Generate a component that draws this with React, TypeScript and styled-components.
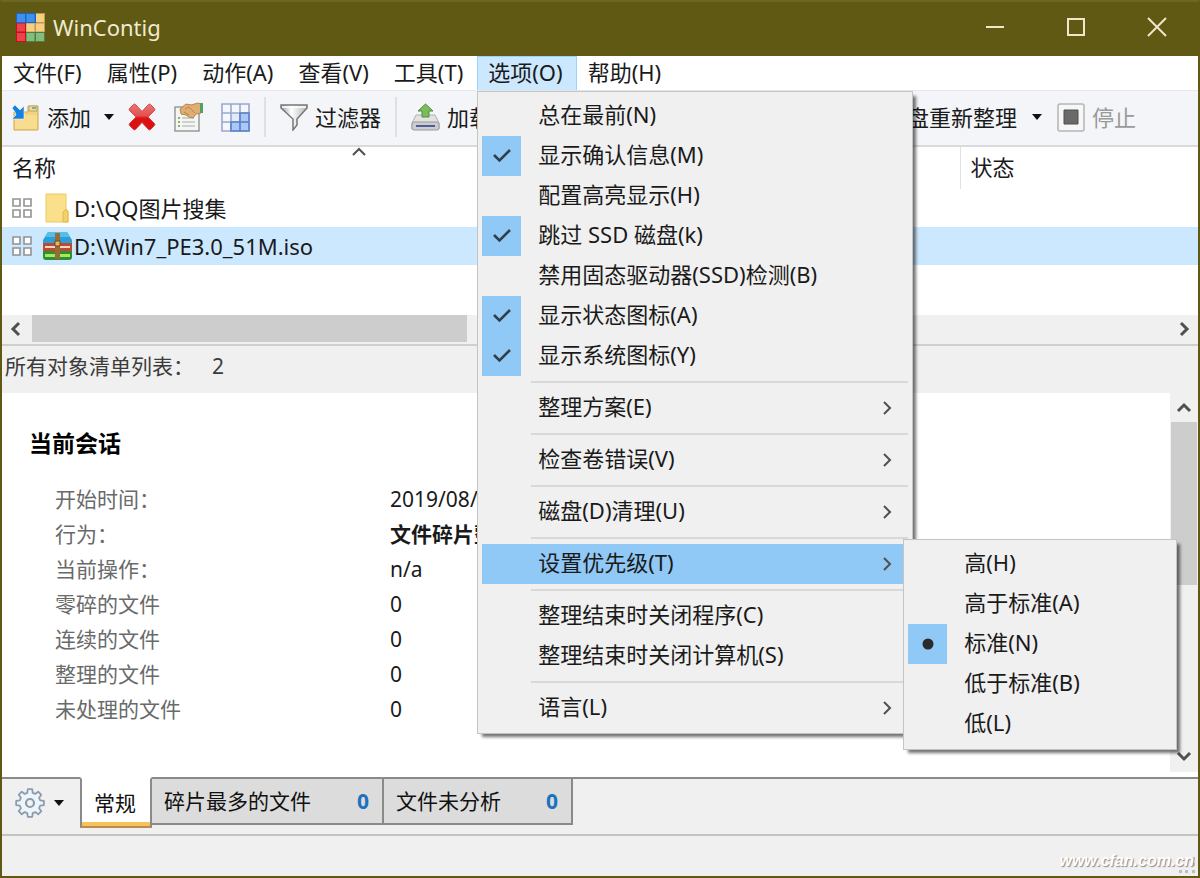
import React from "react";
import styled, { createGlobalStyle, css } from "styled-components";

const olive = "#5f5913";
const face = "#f0f0f0";
const accent = "#90c8f6";

const GlobalStyle = createGlobalStyle`
  * { box-sizing: border-box; }
  body { margin: 0; background: ${face}; }
  button { font: inherit; color: inherit; background: none; border: 0; padding: 0; text-align: left; }
  body, #root { font-family: "Noto Sans", "Noto Sans CJK SC", sans-serif; font-size: 22px; line-height: 32px; color: #1a1a1a; }
`;

const Window = styled.div`
  display: flex;
  flex-direction: column;
  min-height: 100vh;
  border: 2px solid ${olive};
  border-top-color: #6c6624;
  background: #fff;
  overflow: hidden;
  white-space: nowrap;
`;

const TitleBar = styled.header`
  display: flex;
  align-items: center;
  height: 54px;
  padding: 0 5px 4px 14px;
  gap: 8px;
  background: ${olive};
  color: #f0ead0;
`;

const Title = styled.h1`
  flex: 1;
  margin: 0;
  font-size: 22px;
  font-weight: 400;
`;

const CaptionButtons = styled.div`
  display: flex;
  gap: 8px;
`;

const CaptionButton = styled.button`
  display: flex;
  align-items: center;
  justify-content: center;
  width: 73px;
  height: 50px;
`;

const MenuBar = styled.nav`
  display: flex;
  height: 34px;
`;

const MenuSlot = styled.div`
  position: relative;
`;

const MenuButton = styled.button<{ $open?: boolean }>`
  display: block;
  height: 34px;
  padding: 0 14px 2px 11px;
  ${(p) =>
    p.$open &&
    css`
      background: #cce8ff;
      box-shadow: inset 1px 1px #99d1ff, inset -1px 0 #99d1ff;
    `}
`;

const Popup = styled.div`
  position: absolute;
  z-index: 2;
  padding: 4px 4px 5px;
  background: ${face};
  border: 1px solid #c4c4c4;
  box-shadow: 4px 4px 3px -1px rgba(0, 0, 0, 0.55);
`;

const OptionsPopup = styled(Popup)`
  top: 35px;
  left: 0;
  width: 436px;
`;

const PriorityPopup = styled(Popup)`
  top: -5px;
  left: 421px;
  width: 274px;
`;

const ItemSlot = styled.div`
  position: relative;
`;

const Item = styled.button<{ $active?: boolean }>`
  display: flex;
  align-items: center;
  width: 100%;
  height: 40px;
  padding-right: 13px;
  background: ${(p) => (p.$active ? accent : "transparent")};
`;

const Mark = styled.span<{ $on?: boolean }>`
  display: flex;
  align-items: center;
  justify-content: center;
  width: 39px;
  height: 40px;
  margin-right: 17px;
  background: ${(p) => (p.$on ? accent : "transparent")};
`;

const ItemText = styled.span`
  flex: 1;
  padding-bottom: 4px;
`;

const Separator = styled.hr`
  height: 2px;
  margin: 5px 0 5px 49px;
  border: 0;
  background: #d8d8d8;
`;

const ToolBar = styled.div`
  display: flex;
  align-items: center;
  height: 57px;
  padding: 0 62px 2px 10px;
  background: #f3f5f8;
  border-top: 1px solid #e6e7e9;
  border-bottom: 2px solid #d9dadc;
`;

const ToolButton = styled.button<{ $width?: number }>`
  display: flex;
  align-items: center;
  gap: 7px;
  min-width: ${(p) => (p.$width ? `${p.$width}px` : "auto")};
  height: 48px;
  &:disabled {
    color: #9a9a9a;
  }
`;

const ToolDivider = styled.span`
  width: 2px;
  height: 40px;
  margin: 0 14px;
  background: #dfe0e3;
`;

const ToolEnd = styled.div`
  display: flex;
  align-items: center;
  gap: 15px;
  margin-left: auto;
`;

const FileTable = styled.table`
  width: 100%;
  table-layout: fixed;
  border-collapse: collapse;
`;

const HeadCell = styled.th<{ $width?: number }>`
  position: relative;
  width: ${(p) => (p.$width ? `${p.$width}px` : "auto")};
  height: 42px;
  padding: 0 10px 2px;
  font-weight: 400;
  text-align: left;
  & + & {
    border-left: 1px solid #e2e2e2;
  }
`;

const SortArrow = styled.span`
  position: absolute;
  top: -3px;
  left: 50%;
  display: flex;
  transform: translateX(-50%);
`;

const FileRow = styled.tr<{ $selected?: boolean }>`
  height: 38px;
  background: ${(p) => (p.$selected ? "#cce8ff" : "transparent")};
`;

const FileCell = styled.td`
  padding: 0 10px;
`;

const FileName = styled.span`
  display: flex;
  align-items: center;
  height: 38px;
`;

const IconBox = styled.span`
  display: flex;
  justify-content: center;
  width: 30px;
  margin: 0 2px 0 10px;
`;

const ListPane = styled.section`
  min-height: 168px;
`;

const HorizontalScroll = styled.div`
  display: flex;
  align-items: center;
  justify-content: space-between;
  height: 31px;
  padding: 0 6px 2px;
  background: ${face};
  border-bottom: 2px solid #cfcfcf;
`;

const HorizontalThumb = styled.span`
  width: 435px;
  height: 27px;
  margin: 0 auto 0 8px;
  background: #cdcdcd;
`;

const Summary = styled.p`
  display: flex;
  align-items: center;
  gap: 18px;
  height: 47px;
  margin: 0;
  padding: 0 3px 8px;
  background: ${face};
  color: #3c3c3c;
  font-size: 21px;
`;

const SessionPane = styled.section`
  display: flex;
  flex: 1;
  justify-content: space-between;
  min-height: 380px;
  padding-bottom: 5px;
`;

const Session = styled.div`
  padding: 34px 27px 0;
`;

const SessionTitle = styled.h2`
  margin: 0 0 23px;
  font-size: 23px;
  line-height: 32px;
  font-weight: 700;
  color: #000;
`;

const Facts = styled.dl`
  display: grid;
  grid-template-columns: 335px auto;
  grid-auto-rows: 35px;
  margin: 0;
  padding-left: 26px;
  font-size: 21px;
  line-height: 35px;
`;

const Term = styled.dt`
  color: #6a6a6a;
`;

const Value = styled.dd<{ $bold?: boolean }>`
  margin: 0;
  font-weight: ${(p) => (p.$bold ? 700 : 400)};
`;

const VerticalScroll = styled.div`
  display: flex;
  flex-direction: column;
  align-items: center;
  width: 28px;
  padding: 7px 0 8px;
  background: ${face};
`;

const VerticalThumb = styled.span`
  width: 26px;
  height: 163px;
  margin: 6px 0 auto;
  background: #cdcdcd;
`;

const TabBar = styled.div`
  display: flex;
  align-items: flex-start;
  height: 57px;
  background: ${face};
  box-shadow: inset 0 2px #8a8a8a;
`;

const GearButton = styled.button`
  display: flex;
  align-items: center;
  gap: 9px;
  width: 78px;
  height: 52px;
  padding-left: 13px;
`;

const Tab = styled.button<{ $active?: boolean; $width: number }>`
  display: flex;
  align-items: center;
  justify-content: space-between;
  width: ${(p) => p.$width}px;
  height: 48px;
  padding: 0 13px 0 12px;
  font-size: 21px;
  color: #111;
  background: #dcdcdc;
  border: 2px solid #8a8a8a;
  border-left: 0;
  ${(p) =>
    p.$active &&
    css`
      height: 51px;
      background: #fff;
      border-left: 2px solid #8a8a8a;
      border-top-color: #fff;
      border-bottom-color: #b98d4f;
      box-shadow: inset 0 -4px #f6c25c;
    `}
`;

const Count = styled.b`
  color: #1a72c0;
`;

const StatusBar = styled.footer`
  position: relative;
  display: flex;
  align-items: flex-end;
  justify-content: flex-end;
  height: 42px;
  background: ${face};
  border-top: 2px solid #c3c3c3;
`;

const Grip = styled.svg`
  position: absolute;
  right: 2px;
  bottom: 2px;
`;

const SiteMark = styled.span`
  position: relative;
  padding: 0 4px 3px 0;
  font-family: "Liberation Sans", sans-serif;
  font-size: 16px;
  line-height: 24px;
  font-style: italic;
  font-weight: 700;
  color: #fff;
  text-shadow: 1px 1px 1px #8a8a8a;
`;

const Caret = () => (
  <svg width="10" height="6" viewBox="0 0 10 6" aria-hidden="true">
    <path d="M0 0h10L5 6z" fill="#111" />
  </svg>
);

type Direction = "up" | "down" | "left" | "right";
const turns: Record<Direction, number> = { up: 0, right: 90, down: 180, left: 270 };

const Chevron = ({ to, size = 16, weight = 3 }: { to: Direction; size?: number; weight?: number }) => (
  <svg width={size} height={size} viewBox="0 0 16 16" aria-hidden="true">
    <path
      d="M2 11L8 5l6 6"
      transform={`rotate(${turns[to]} 8 8)`}
      fill="none"
      stroke="#505050"
      strokeWidth={weight}
    />
  </svg>
);

const appTiles = [
  "#3f8fee", "#3f8fee", "#f6cf82",
  "#e8454c", "#f6cf82", "#f6cf82",
  "#e8454c", "#86bd7c", "#86bd7c",
];

const AppIcon = () => (
  <svg width="29" height="29" viewBox="0 0 29 29" aria-hidden="true">
    <path d="M0 0h20v10H0z" fill="#1767c8" />
    <path d="M0 10h10v19H0z" fill="#c90f1c" />
    <path d="M20 0h9v19H10v-9h10z" fill="#b99a4f" />
    <path d="M10 19h19v10H10z" fill="#4b7d45" />
    {appTiles.map((fill, i) => (
      <rect key={i} x={1 + (i % 3) * 9.5} y={1 + Math.floor(i / 3) * 9.5} width="8" height="8" fill={fill} />
    ))}
  </svg>
);

const AddIcon = () => (
  <svg width="28" height="28" viewBox="0 0 28 28" aria-hidden="true">
    <path d="M2 9h14V3h10v24H2z" fill="#f3d27d" stroke="#cfa94f" />
    <path d="M17 3h8v5h-8z" fill="#e9e0ae" stroke="#b7a765" />
    <path d="M20 4h4v2h-4z" fill="#8fa98a" />
    <path d="M3 12h22v14H3z" fill="#f8dc90" />
    <path d="M0 5l3-3 5 5 4-4v13H0l4-4-1-3z" fill="#1482e0" stroke="#f3f5f8" strokeWidth=".6" />
  </svg>
);

const DeleteIcon = () => (
  <svg width="28" height="28" viewBox="0 0 28 28" aria-hidden="true">
    <defs>
      <linearGradient id="cross" x1="0" y1="0" x2="0" y2="1">
        <stop offset="0" stopColor="#ea7676" />
        <stop offset=".45" stopColor="#e25050" />
        <stop offset=".55" stopColor="#dc1212" />
        <stop offset="1" stopColor="#d81010" />
      </linearGradient>
    </defs>
    <path
      d="M1.500 5.500L5.500 1.500q1-1 2 0L14 8.500l6.500-7q1-1 2 0l4 4q.8 1 0 2L20 14l6.500 6.500q.8 1 0 2l-4 4q-1 .8-2 0L14 19.500l-6.500 7q-1 .8-2 0l-4-4q-.8-1 0-2L8 14 1.500 7.500q-.8-1 0-2z"
      fill="url(#cross)"
      stroke="#da4444"
    />
  </svg>
);

const PropertiesIcon = () => (
  <svg width="29" height="30" viewBox="0 0 29 30" aria-hidden="true">
    <path d="M1 5h24v24H1z" fill="#f5f5f3" stroke="#999" strokeWidth="1.500" />
    <path d="M4 16h2M4 20h2M4 24h2" stroke="#86b36a" strokeWidth="2" />
    <path d="M8 16h12M8 20h13M8 24h13" stroke="#c0c3c6" strokeWidth="1.500" />
    <path d="M6 7l6-5 5 1 7-2 3 1v9l-5 1-3 4-4-1-3-2-5-1z" fill="#e0ad74" stroke="#b8864d" />
    <path d="M11 7l4-2 6 6M10 10l5 3" fill="none" stroke="#b8864d" />
    <path d="M26 1h3v10h-3z" fill="#4fa263" />
  </svg>
);

const GridIcon = () => (
  <svg width="29" height="29" viewBox="0 0 29 29" aria-hidden="true">
    <path d="M1 1h27v27H1z" fill="#f4f7fd" />
    <path d="M10 10h9v9h-9z" fill="#e3e9f6" />
    <path d="M19 10h9v18H10v-9h9z" fill="#a9c8f8" />
    <path d="M1 1h27v27H1zM10 1v27M19 1v27M1 10h27M1 19h27" fill="none" stroke="#99a8cc" strokeWidth="1.600" />
    <path d="M19 10h9v18H10v-9h9zM19 19h9M19 19v9" fill="none" stroke="#5d82ca" strokeWidth="1.600" />
  </svg>
);

const FilterIcon = () => (
  <svg width="28" height="27" viewBox="0 0 28 27" aria-hidden="true">
    <defs>
      <linearGradient id="funnel">
        <stop offset="0" stopColor="#9d9d9d" />
        <stop offset=".4" stopColor="#fff" />
        <stop offset="1" stopColor="#b5b5b5" />
      </linearGradient>
    </defs>
    <path d="M1 1h26v3L17 15v6l-4 5V15L1 4z" fill="url(#funnel)" stroke="#777" strokeWidth="1.500" />
    <path d="M2 3h24" stroke="#fff" strokeWidth="1.500" />
  </svg>
);

const LoadIcon = () => (
  <svg width="29" height="28" viewBox="0 0 29 28" aria-hidden="true">
    <path d="M5 12h19l4 8v6H1v-6z" fill="#e2e2e2" stroke="#b0b0b0" />
    <rect x="1" y="19" width="27" height="8" rx="2" fill="#cdcdcd" stroke="#9a9a9a" />
    <path d="M5 23h19" stroke="#4b5d9b" strokeWidth="2" />
    <path d="M14.500 1l7.500 7h-4v6h-7V8H7z" fill="#7dbb5c" stroke="#4d8f3b" />
  </svg>
);

const StopIcon = () => (
  <svg width="28" height="29" viewBox="0 0 28 29" aria-hidden="true">
    <rect x="1" y="1" width="26" height="27" rx="2" fill="#f7f7f7" stroke="#b5b5b5" strokeWidth="1.500" />
    <path d="M7 7h14v14H7z" fill="#6a6a6a" stroke="#4f4f4f" />
  </svg>
);

const StateIcon = () => (
  <svg width="20" height="20" viewBox="0 0 20 20" aria-hidden="true">
    <path
      d="M1 1h7v7H1zM12 1h7v7h-7zM1 12h7v7H1zM12 12h7v7h-7z"
      fill="#fff"
      stroke="#929292"
      strokeWidth="1.600"
    />
  </svg>
);

const FolderIcon = () => (
  <svg width="24" height="30" viewBox="0 0 24 30" aria-hidden="true">
    <path d="M1 1h20v15l2 2v11H1z" fill="#fae08a" stroke="#ecca62" />
    <path d="M18 29V19l3-3 2 2v11z" fill="#f3d06a" stroke="#dfb94e" />
  </svg>
);

const ArchiveIcon = () => (
  <svg width="29" height="28" viewBox="0 0 29 28" aria-hidden="true">
    <path d="M5 0h19l5 8v3H0V8z" fill="#2a9fd8" />
    <path d="M5 0h19l3 5H2z" fill="#54bdea" />
    <path d="M0 11h29v8H0z" fill="#c0492f" />
    <path d="M2 14h25v2H2z" fill="#f0d5c8" />
    <path d="M0 19h29v6q0 3-3 3H3q-3 0-3-3z" fill="#2f8f35" />
    <path d="M2 22h25v3H2z" fill="#a5ea5a" />
    <path d="M12 1h5v26h-5z" fill="#9a6a34" />
    <path d="M12 9h5v5h-5z" fill="#e2b862" stroke="#6d4a1e" />
  </svg>
);

const polar = (radius: number, degrees: number) => {
  const a = (degrees * Math.PI) / 180;
  return `${(15 + radius * Math.sin(a)).toFixed(2)} ${(15 - radius * Math.cos(a)).toFixed(2)}`;
};

const gearOutline =
  "M" +
  [0, 45, 90, 135, 180, 225, 270, 315]
    .map((a) => [polar(10.5, a - 15), polar(14, a - 9), polar(14, a + 9), polar(10.5, a + 15)].join("L"))
    .join("L") +
  "z";

const GearIcon = () => (
  <svg width="30" height="30" viewBox="0 0 30 30" aria-hidden="true">
    <path d={gearOutline} fill="#edf4fa" stroke="#8a9cae" strokeWidth="1.800" strokeLinejoin="round" />
    <circle cx="15" cy="15" r="4" fill="#f3f3f3" stroke="#8a9cae" strokeWidth="2.200" />
  </svg>
);

const CheckIcon = () => (
  <svg width="20" height="16" viewBox="0 0 20 16" aria-hidden="true">
    <path d="M2 7l5.500 5.500L18 2" fill="none" stroke="#2f3f4c" strokeWidth="2.600" />
  </svg>
);

const DotIcon = () => (
  <svg width="12" height="12" viewBox="0 0 12 12" aria-hidden="true">
    <circle cx="6" cy="6" r="5.500" fill="#2b2b2b" />
  </svg>
);

const GripDots = () => (
  <Grip width="18" height="18" viewBox="0 0 18 18" aria-hidden="true">
    <path
      d="M1 14h3v3H1zM7 14h3v3H7zM14 14h3v3h-3zM7 7h3v3H7zM14 7h3v3h-3zM14 1h3v3h-3z"
      fill="#bdbdbd"
    />
  </Grip>
);

const captionShapes: [string, string][] = [
  ["最小化", "M1 10h18"],
  ["最大化", "M2 2h16v16H2z"],
  ["关闭", "M1 1l18 18M19 1L1 19"],
];

type Entry = { label: string; checked?: boolean; more?: boolean };

const optionGroups: Entry[][] = [
  [
    { label: "总在最前(N)" },
    { label: "显示确认信息(M)", checked: true },
    { label: "配置高亮显示(H)" },
    { label: "跳过 SSD 磁盘(k)", checked: true },
    { label: "禁用固态驱动器(SSD)检测(B)" },
    { label: "显示状态图标(A)", checked: true },
    { label: "显示系统图标(Y)", checked: true },
  ],
  [{ label: "整理方案(E)", more: true }],
  [{ label: "检查卷错误(V)", more: true }],
  [{ label: "磁盘(D)清理(U)", more: true }],
  [{ label: "设置优先级(T)", more: true }],
  [{ label: "整理结束时关闭程序(C)" }, { label: "整理结束时关闭计算机(S)" }],
  [{ label: "语言(L)", more: true }],
];

const priorities = ["高(H)", "高于标准(A)", "标准(N)", "低于标准(B)", "低(L)"];
const currentPriority = "标准(N)";
const menus = ["文件(F)", "属性(P)", "动作(A)", "查看(V)", "工具(T)", "选项(O)", "帮助(H)"];

const facts: [string, string][] = [
  ["开始时间：", "2019/08/12"],
  ["行为：", "文件碎片整理"],
  ["当前操作：", "n/a"],
  ["零碎的文件", "0"],
  ["连续的文件", "0"],
  ["整理的文件", "0"],
  ["未处理的文件", "0"],
];

const PriorityMenu = () => (
  <PriorityPopup role="menu">
    {priorities.map((name) => {
      const on = name === currentPriority;
      return (
        <Item key={name} role="menuitemradio" aria-checked={on}>
          <Mark $on={on}>{on && <DotIcon />}</Mark>
          <ItemText>{name}</ItemText>
        </Item>
      );
    })}
  </PriorityPopup>
);

const OptionsMenu = ({ openItem }: { openItem: string }) => (
  <OptionsPopup role="menu">
    {optionGroups.map((group, g) => (
      <React.Fragment key={g}>
        {g > 0 && <Separator />}
        {group.map(({ label, checked, more }) => (
          <ItemSlot key={label}>
            <Item
              role={checked ? "menuitemcheckbox" : "menuitem"}
              aria-checked={checked}
              $active={label === openItem}
            >
              <Mark $on={checked}>{checked && <CheckIcon />}</Mark>
              <ItemText>{label}</ItemText>
              {more && <Chevron to="right" size={16} weight={2} />}
            </Item>
            {label === openItem && <PriorityMenu />}
          </ItemSlot>
        ))}
      </React.Fragment>
    ))}
  </OptionsPopup>
);

export default function App() {
  return (
    <>
      <GlobalStyle />
      <Window>
        <TitleBar>
          <AppIcon />
          <Title>WinContig</Title>
          <CaptionButtons>
            {captionShapes.map(([name, d]) => (
              <CaptionButton key={name} aria-label={name}>
                <svg width="20" height="20" viewBox="0 0 20 20" aria-hidden="true">
                  <path d={d} fill="none" stroke="#f0e6c8" strokeWidth="2" />
                </svg>
              </CaptionButton>
            ))}
          </CaptionButtons>
        </TitleBar>

        <MenuBar>
          {menus.map((name) => {
            const open = name === "选项(O)";
            return (
              <MenuSlot key={name}>
                <MenuButton $open={open}>{name}</MenuButton>
                {open && <OptionsMenu openItem="设置优先级(T)" />}
              </MenuSlot>
            );
          })}
        </MenuBar>

        <ToolBar>
          <ToolButton $width={92}><AddIcon />添加</ToolButton>
          <ToolButton $width={24} aria-label="添加选项"><Caret /></ToolButton>
          <ToolButton $width={46} aria-label="删除"><DeleteIcon /></ToolButton>
          <ToolButton $width={47} aria-label="属性"><PropertiesIcon /></ToolButton>
          <ToolButton aria-label="表格"><GridIcon /></ToolButton>
          <ToolDivider />
          <ToolButton><FilterIcon />过滤器</ToolButton>
          <ToolDivider />
          <ToolButton><LoadIcon />加载</ToolButton>
          <ToolEnd>
            <ToolButton>磁盘重新整理</ToolButton>
            <ToolButton aria-label="整理选项"><Caret /></ToolButton>
            <ToolButton disabled><StopIcon />停止</ToolButton>
          </ToolEnd>
        </ToolBar>

        <ListPane>
          <FileTable>
            <thead>
              <tr>
                <HeadCell $width={714}>
                  名称
                  <SortArrow><Chevron to="up" size={16} weight={2} /></SortArrow>
                </HeadCell>
                <HeadCell $width={244}>大小</HeadCell>
                <HeadCell>状态</HeadCell>
              </tr>
            </thead>
            <tbody>
              <FileRow>
                <FileCell colSpan={3}>
                  <FileName><StateIcon /><IconBox><FolderIcon /></IconBox>D:\QQ图片搜集</FileName>
                </FileCell>
              </FileRow>
              <FileRow $selected>
                <FileCell colSpan={3}>
                  <FileName><StateIcon /><IconBox><ArchiveIcon /></IconBox>D:\Win7_PE3.0_51M.iso</FileName>
                </FileCell>
              </FileRow>
            </tbody>
          </FileTable>
        </ListPane>

        <HorizontalScroll>
          <Chevron to="left" />
          <HorizontalThumb />
          <Chevron to="right" />
        </HorizontalScroll>
        <Summary><span>所有对象清单列表：</span><span>2</span></Summary>

        <SessionPane>
          <Session>
            <SessionTitle>当前会话</SessionTitle>
            <Facts>
              {facts.map(([term, value], i) => (
                <React.Fragment key={term}>
                  <Term>{term}</Term>
                  <Value $bold={i === 1}>{value}</Value>
                </React.Fragment>
              ))}
            </Facts>
          </Session>
          <VerticalScroll>
            <Chevron to="up" />
            <VerticalThumb />
            <Chevron to="down" />
          </VerticalScroll>
        </SessionPane>

        <TabBar role="tablist">
          <GearButton aria-label="设置"><GearIcon /><Caret /></GearButton>
          <Tab role="tab" aria-selected $active $width={72}>常规</Tab>
          <Tab role="tab" $width={232}>碎片最多的文件<Count>0</Count></Tab>
          <Tab role="tab" $width={189}>文件未分析<Count>0</Count></Tab>
        </TabBar>

        <StatusBar>
          <GripDots />
          <SiteMark>www.cfan.com.cn</SiteMark>
        </StatusBar>
      </Window>
    </>
  );
}
